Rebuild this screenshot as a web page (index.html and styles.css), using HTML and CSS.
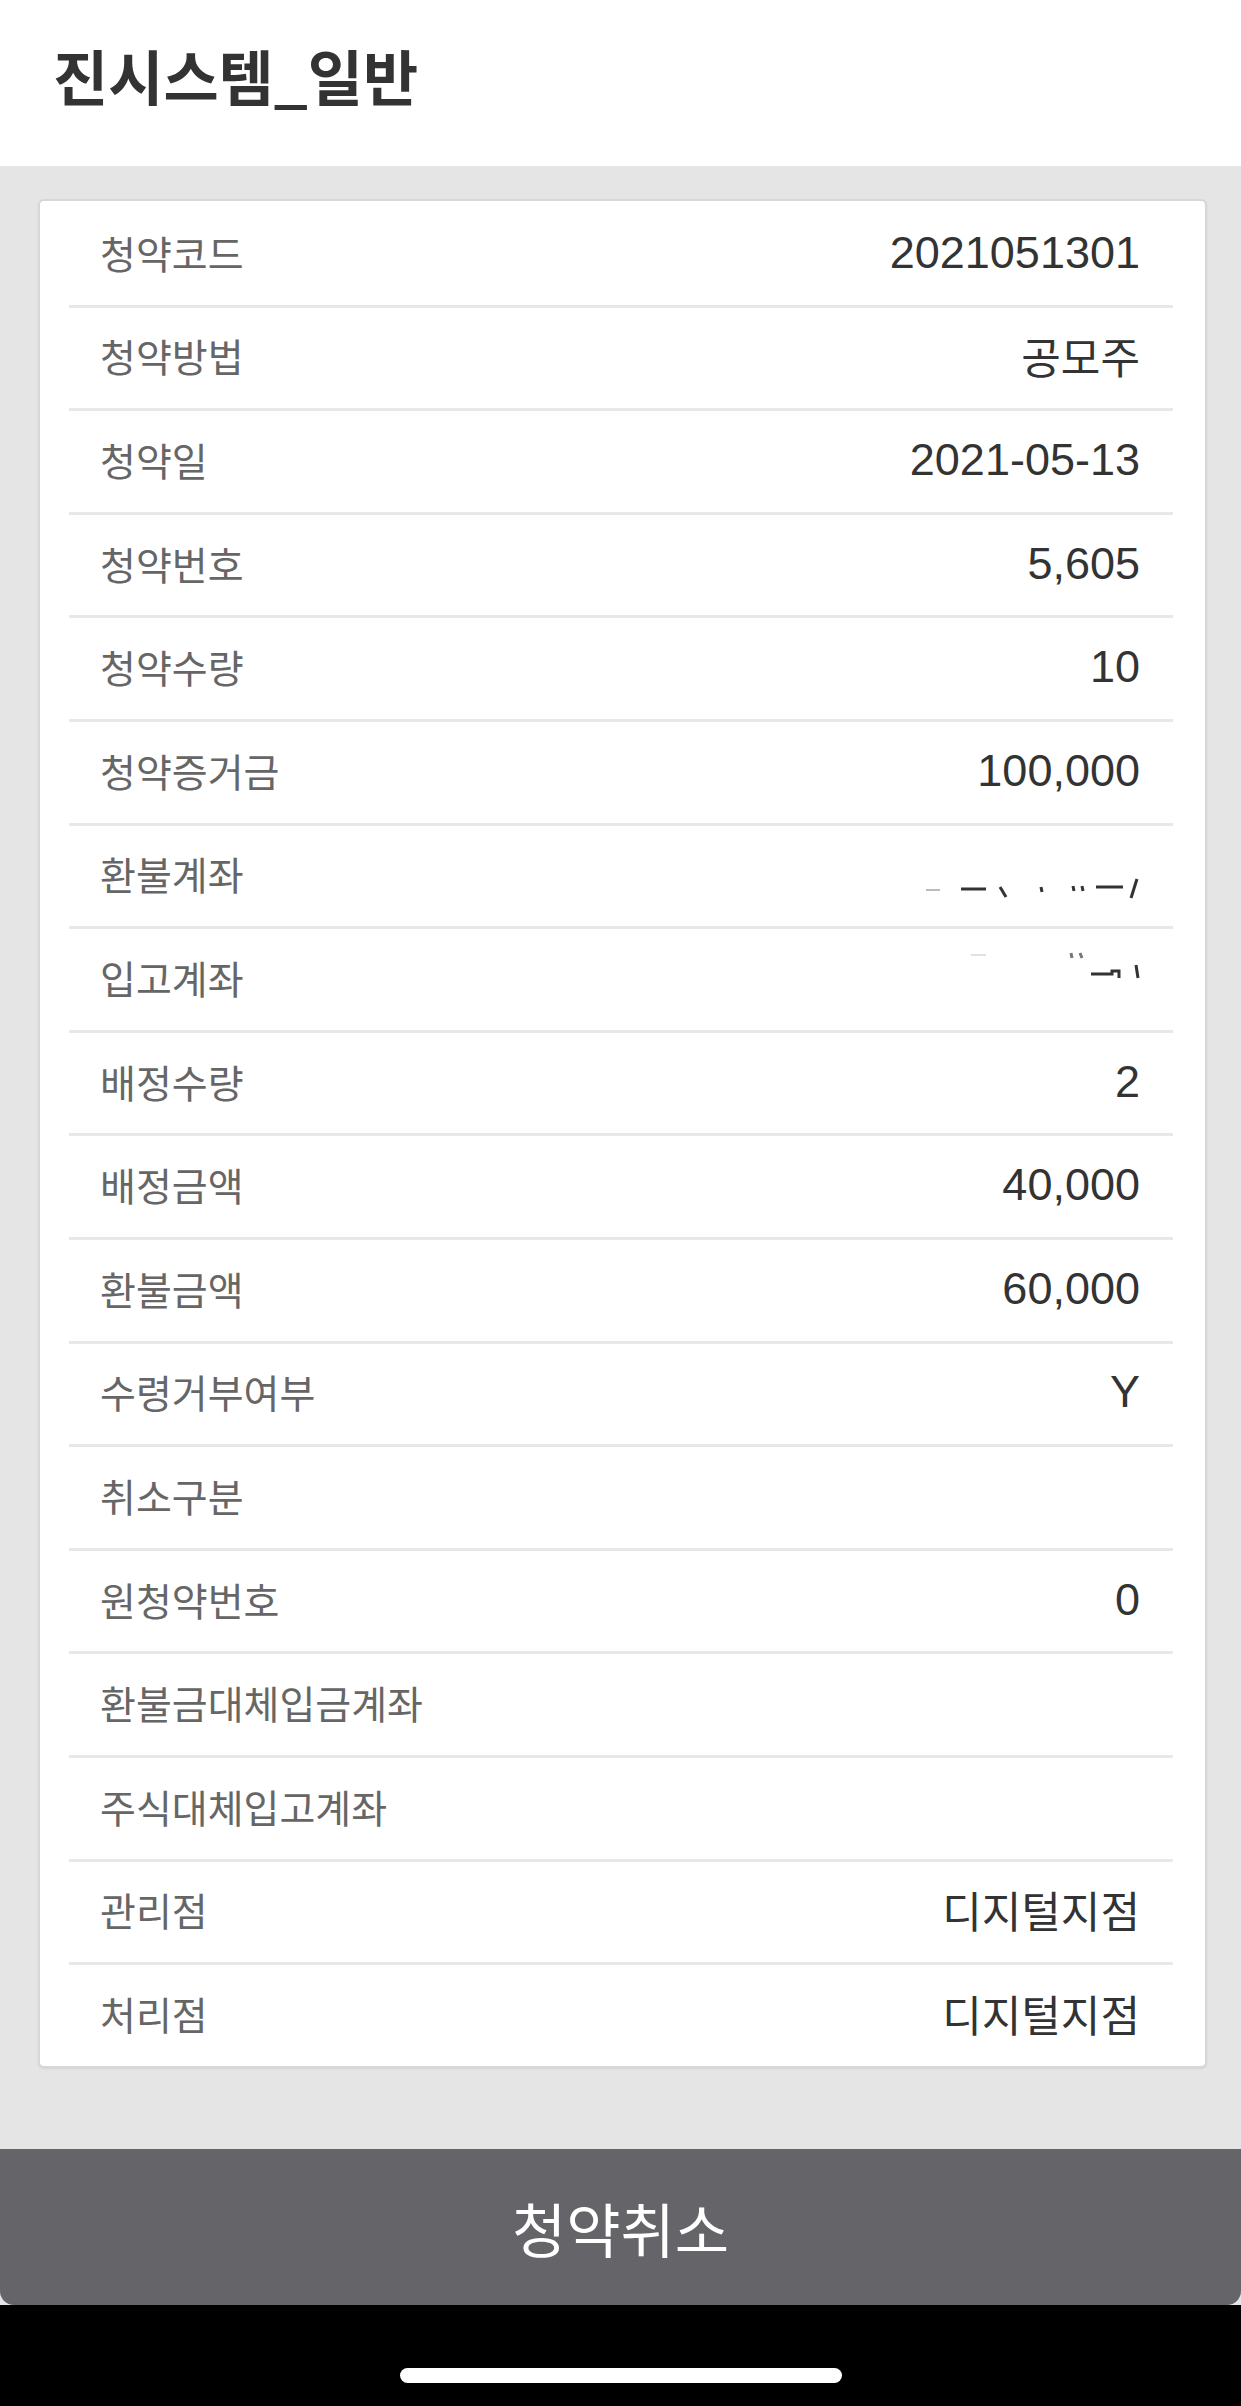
FILE: index.html
```html
<!DOCTYPE html>
<html lang="ko">
<head>
    <meta charset="UTF-8">
    <title>진시스템_일반</title>
    <link rel="stylesheet" href="styles.css">
</head>
<body>
<div class="header">
    <h1 class="title">진시스템_일반</h1>
</div>
<div class="content">
    <div class="card">
        <ul class="info-list">
            <li class="row"><span class="label">청약코드</span><span class="value">2021051301</span></li>
            <li class="row"><span class="label">청약방법</span><span class="value ko">공모주</span></li>
            <li class="row"><span class="label">청약일</span><span class="value">2021-05-13</span></li>
            <li class="row"><span class="label">청약번호</span><span class="value">5,605</span></li>
            <li class="row"><span class="label">청약수량</span><span class="value">10</span></li>
            <li class="row"><span class="label">청약증거금</span><span class="value">100,000</span></li>
            <li class="row">
                <span class="label">환불계좌</span>
                <!-- 가려진 계좌번호 흔적 -->
                <svg class="redact redact-low" width="215" height="22" viewBox="0 0 215 22">
                    <g stroke="#333" stroke-width="3" fill="none">
                        <line x1="1" y1="13" x2="15" y2="13" stroke="#bbb" stroke-width="2"/>
                        <line x1="36" y1="12" x2="61" y2="12"/>
                        <line x1="75" y1="10" x2="81" y2="20"/>
                        <line x1="116" y1="10" x2="117" y2="15"/>
                        <line x1="148" y1="9" x2="149" y2="14"/>
                        <line x1="157" y1="9" x2="158" y2="14"/>
                        <line x1="171" y1="10" x2="198" y2="10"/>
                        <line x1="212" y1="2" x2="206" y2="21"/>
                    </g>
                </svg>
            </li>
            <li class="row">
                <span class="label">입고계좌</span>
                <svg class="redact redact-high" width="177" height="33" viewBox="0 0 177 33">
                    <g stroke="#333" stroke-width="3" fill="none">
                        <line x1="8" y1="8" x2="23" y2="8" stroke="#e2e2e2" stroke-width="2"/>
                        <line x1="108" y1="6" x2="109" y2="11" stroke="#777"/>
                        <line x1="117" y1="6" x2="119" y2="11" stroke="#777"/>
                        <polyline points="128,27 149,27 149,24 156,24 156,31"/>
                        <line x1="173" y1="18" x2="175" y2="31"/>
                    </g>
                </svg>
            </li>
            <li class="row"><span class="label">배정수량</span><span class="value">2</span></li>
            <li class="row"><span class="label">배정금액</span><span class="value">40,000</span></li>
            <li class="row"><span class="label">환불금액</span><span class="value">60,000</span></li>
            <li class="row"><span class="label">수령거부여부</span><span class="value">Y</span></li>
            <li class="row"><span class="label">취소구분</span><span class="value"></span></li>
            <li class="row"><span class="label">원청약번호</span><span class="value">0</span></li>
            <li class="row"><span class="label">환불금대체입금계좌</span><span class="value"></span></li>
            <li class="row"><span class="label">주식대체입고계좌</span><span class="value"></span></li>
            <li class="row"><span class="label">관리점</span><span class="value ko">디지털지점</span></li>
            <li class="row"><span class="label">처리점</span><span class="value ko">디지털지점</span></li>
        </ul>
    </div>
</div>
<div class="btn-area">
    <button class="btn-cancel" type="button">청약취소</button>
</div>
<div class="home-bar">
    <span class="home-indicator"></span>
</div>
</body>
</html>
```

FILE: styles.css
```css
*{
    margin:0;
    padding:0;
    box-sizing:border-box;
}
ul{
    list-style:none;
}
body{
    background:#e5e5e5;
    font-family:"Noto Sans CJK KR", sans-serif;
    width:1241px;
}
.header{
    height:166px;
    background:#fff;
    display:flex;
    align-items:center;
    padding:0 0 16px 53px;
}
.title{
    font-size:60px;
    font-weight:bold;
    color:#333;
    line-height:1;
}
.content{
    padding:33px 34px 81px 38px;
}
.card{
    background:#fff;
    border:2px solid #d7d7d7;
    border-radius:6px;
    padding:3px 32px 0 29px;
    box-shadow:0 1px 2px rgba(0,0,0,0.08);
}
.row{
    height:103.6px;
    display:flex;
    align-items:center;
    justify-content:space-between;
    padding:0 33px 4px 31px;
    border-bottom:3px solid #e8e8e8;
}
.row:last-child{
    height:101px;
    border-bottom:none;
}
.label{
    font-size:39px;
    color:#666;
    line-height:1;
}
.value{
    font-family:"Liberation Sans", "Noto Sans CJK KR", sans-serif;
    font-size:45px;
    color:#333;
    line-height:1;
}
.value.ko{
    font-family:"Noto Sans CJK KR", sans-serif;
    font-size:43px;
}
.redact{
    display:block;
}
.redact-low{
    margin-top:28px;
}
.redact-high{
    margin-top:-27px;
}
.btn-area{
    background:#e5e5e5;
}
.btn-cancel{
    display:block;
    width:100%;
    height:156px;
    border:none;
    border-radius:0 0 14px 14px;
    background:#656469;
    color:#fff;
    font-family:"Noto Sans CJK KR", sans-serif;
    font-size:59px;
    line-height:1;
}
.home-bar{
    height:101px;
    background:#000;
    display:flex;
    justify-content:center;
    padding-top:63px;
}
.home-indicator{
    width:442px;
    height:15px;
    border-radius:8px;
    background:#fff;
}
```
